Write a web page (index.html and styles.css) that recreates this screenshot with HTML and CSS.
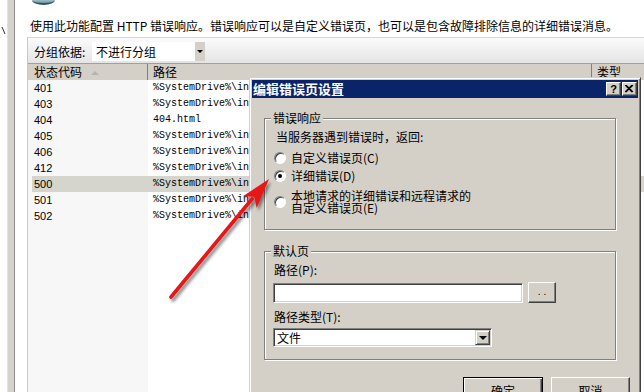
FILE: index.html
```html
<!DOCTYPE html>
<html lang="zh-CN">
<head>
<meta charset="utf-8">
<title>HTTP 错误响应</title>
<link rel="stylesheet" href="styles.css">
</head>
<body>
<div class="app">
  <div class="side">
    <svg class="side-mark" width="7" height="10" viewBox="0 0 7 10"><path d="M2 1 L5 8" stroke="#333" stroke-width="1" fill="none"/></svg>
  </div>
  <div class="main">
    <div class="top">
      <div class="feature-icon"></div>
      <p class="desc">使用此功能配置 HTTP 错误响应。错误响应可以是自定义错误页，也可以是包含故障排除信息的详细错误消息。</p>
    </div>
    <div class="panel">
      <div class="toolbar">
        <span class="tb-label">分组依据:</span>
        <div class="combo"><span class="combo-text">不进行分组</span><span class="combo-btn"><i class="tri"></i></span></div>
      </div>
      <div class="lv-header">
        <div class="hcell c1">状态代码<i class="sort"></i></div>
        <div class="hcell c2">路径</div>
        <div class="hcell c3">类型</div>
      </div>
      <div class="lv-body">
        <div class="row"><span class="code">401</span><span class="path">%SystemDrive%\inetpub\custerr\&lt;LANGUAGE-TAG&gt;\401.htm</span><span class="type">文件</span></div>
        <div class="row"><span class="code">403</span><span class="path">%SystemDrive%\inetpub\custerr\&lt;LANGUAGE-TAG&gt;\403.htm</span><span class="type">文件</span></div>
        <div class="row"><span class="code">404</span><span class="path">404.html</span><span class="type">文件</span></div>
        <div class="row"><span class="code">405</span><span class="path">%SystemDrive%\inetpub\custerr\&lt;LANGUAGE-TAG&gt;\405.htm</span><span class="type">文件</span></div>
        <div class="row"><span class="code">406</span><span class="path">%SystemDrive%\inetpub\custerr\&lt;LANGUAGE-TAG&gt;\406.htm</span><span class="type">文件</span></div>
        <div class="row"><span class="code">412</span><span class="path">%SystemDrive%\inetpub\custerr\&lt;LANGUAGE-TAG&gt;\412.htm</span><span class="type">文件</span></div>
        <div class="row sel"><span class="code">500</span><span class="path">%SystemDrive%\inetpub\custerr\&lt;LANGUAGE-TAG&gt;\500.htm</span><span class="type">文件</span></div>
        <div class="row"><span class="code">501</span><span class="path">%SystemDrive%\inetpub\custerr\&lt;LANGUAGE-TAG&gt;\501.htm</span><span class="type">文件</span></div>
        <div class="row"><span class="code">502</span><span class="path">%SystemDrive%\inetpub\custerr\&lt;LANGUAGE-TAG&gt;\502.htm</span><span class="type">文件</span></div>
      </div>
    </div>
  </div>
</div>

<div class="dialog">
  <div class="titlebar">
    <span class="title">编辑错误页设置</span>
    <span class="tbtn help">?</span>
    <span class="tbtn close"><svg width="9" height="8" viewBox="0 0 9 8"><path d="M1 0 L8 7 M0 0 L7 7 M8 0 L1 7 M7 0 L0 7" stroke="#000" stroke-width="1.1" fill="none"/></svg></span>
  </div>
  <div class="dbody">
    <div class="group group1">
      <div class="gtitle">错误响应</div>
      <div class="prompt">当服务器遇到错误时，返回:</div>
      <div class="radio-row r1"><span class="radio"></span><span>自定义错误页(C)</span></div>
      <div class="radio-row r2"><span class="radio on"></span><span>详细错误(D)</span></div>
      <div class="radio-row r3"><span class="radio"></span><span>本地请求的详细错误和远程请求的<br>自定义错误页(E)</span></div>
    </div>
    <div class="group group2">
      <div class="gtitle">默认页</div>
      <div class="label">路径(P):</div>
      <div class="path-row">
        <div class="textbox"></div>
        <div class="btn browse">. .</div>
      </div>
      <div class="label label2">路径类型(T):</div>
      <div class="select"><span class="select-text">文件</span><span class="select-btn"><i class="tri big"></i></span></div>
    </div>
    <div class="actions">
      <div class="pbtn default">确定</div>
      <div class="pbtn btn cancel">取消</div>
    </div>
  </div>
</div>

<svg class="arrow" width="644" height="392" viewBox="0 0 644 392">
  <defs>
    <filter id="sh" x="-20%" y="-20%" width="140%" height="140%">
      <feDropShadow dx="2" dy="3" stdDeviation="1.4" flood-color="#000" flood-opacity="0.45"/>
    </filter>
  </defs>
  <g filter="url(#sh)">
    <path d="M171 297 L252 199" stroke="#e81414" stroke-width="3.6" stroke-linecap="round" fill="none"/>
    <polygon points="269,179 242.9,196.3 254.3,196.7 256.7,207.9" fill="#e81414"/>
  </g>
</svg>
</body>
</html>
```
FILE: styles.css
```css
* { box-sizing: border-box; }

body {
  margin: 0;
  width: 644px;
  height: 392px;
  overflow: hidden;
  background: #fff;
  color: #000;
  font-family: "Noto Sans CJK SC", "Noto Sans", sans-serif;
  font-size: 12px;
  line-height: 14px;
  position: relative;
}

.app {
  display: flex;
  height: 392px;
}

.side {
  width: 15px;
  flex: none;
  background: linear-gradient(to right, #fff 0 7px, #e2e2e2 7px 8px, #d6d3cc 8px 14px, #8c8c8c 14px 15px);
}

.side-mark {
  display: block;
  margin-top: 26px;
}

.main {
  flex: 1;
  min-width: 0;
  display: flex;
  flex-direction: column;
}

.top {
  height: 37px;
  padding-left: 17px;
}

.feature-icon {
  width: 23px;
  height: 5px;
  border-radius: 0 0 12px 12px / 0 0 5px 5px;
  background: linear-gradient(#9fbcc4, #6f98a4);
  border-bottom: 2px solid #2c5464;
}

.desc {
  margin: 14px 0 0 -2px;
  line-height: 14px;
  white-space: nowrap;
}

.panel {
  flex: 1;
  min-height: 0;
  margin-left: 12px;
  border-left: 1px solid #c9c9c9;
  display: flex;
  flex-direction: column;
}

.toolbar {
  height: 26px;
  border-top: 1px solid #d6d6d6;
  background: linear-gradient(#fbfbfb, #e4e4e4);
  display: flex;
  align-items: center;
  padding: 2px 0 0 6px;
}

.tb-label {
  width: 58px;
  line-height: 14px;
}

.combo {
  display: flex;
  width: 113px;
  height: 19px;
  background: #fff;
}

.combo-text {
  flex: 1;
  padding-left: 4px;
  line-height: 19px;
}

.combo-btn {
  width: 10px;
  background: #d4d0c8;
  display: flex;
  align-items: center;
  justify-content: center;
}

.tri {
  display: block;
  border-left: 3px solid transparent;
  border-right: 3px solid transparent;
  border-top: 3px solid #000;
}

.tri.big {
  border-left-width: 4px;
  border-right-width: 4px;
  border-top-width: 4px;
}

.lv-header {
  display: flex;
  height: 17px;
  border-top: 1px solid #a0a0a0;
  background: #d4d0c8;
}

.hcell {
  line-height: 16px;
  white-space: nowrap;
}

.c1 {
  width: 120px;
  padding-left: 6px;
  border-right: 1px solid #808080;
}

.c2 {
  width: 444px;
  padding-left: 5px;
  border-right: 1px solid #808080;
}

.c3 {
  flex: 1;
  padding-left: 5px;
}

.sort {
  display: inline-block;
  vertical-align: middle;
  margin: -2px 0 0 9px;
  border-left: 4px solid transparent;
  border-right: 4px solid transparent;
  border-bottom: 4px solid #b4b4b4;
}

.lv-body {
  flex: 1;
  overflow: hidden;
  background: linear-gradient(to right, #f7f7f7 0 120px, #fff 120px);
}

.row {
  display: flex;
  height: 16px;
  line-height: 16px;
  margin-left: 4px;
  white-space: nowrap;
}

.row.sel {
  background: #d5d5cd;
}

.code {
  width: 115px;
  flex: none;
  padding-left: 2px;
  font-family: "Liberation Sans", Arial, sans-serif;
  font-size: 11px;
}

.path {
  width: 444px;
  flex: none;
  padding-left: 6px;
  overflow: hidden;
  font-family: "Liberation Mono", monospace;
  font-size: 10px;
}

.type {
  padding-left: 6px;
}

/* dialog window */
.dialog {
  position: absolute;
  left: 249px;
  top: 77px;
  width: 392px;
  height: 330px;
  background: #d4d0c8;
  border: 1px solid;
  border-color: #d4d0c8 #404040 #404040 #d4d0c8;
  box-shadow: inset 1px 1px #fff, inset -1px -1px #808080;
  padding: 2px;
}

.titlebar {
  height: 18px;
  background: #0a246a;
  color: #fff;
  display: flex;
  align-items: center;
}

.title {
  flex: 1;
  padding-left: 1px;
  font-weight: bold;
  font-size: 13px;
  line-height: 18px;
}

.tbtn {
  width: 15px;
  height: 14px;
  margin-right: 1px;
  background: #d4d0c8;
  border: 1px solid;
  border-color: #fff #404040 #404040 #fff;
  box-shadow: inset -1px -1px #808080;
  color: #000;
  display: flex;
  align-items: center;
  justify-content: center;
  font: bold 11px/12px "Liberation Sans", Arial, sans-serif;
}

.dbody {
  padding: 0 8px 0 12px;
}

.group {
  margin-right: 14px;
  border: 1px solid #808080;
  box-shadow: inset 1px 1px #fff, 1px 1px #fff;
  padding: 0 8px;
}

.group1 {
  margin-top: 20px;
  padding-bottom: 15px;
}

.group2 {
  margin-top: 21px;
  padding-bottom: 12px;
}

.gtitle {
  width: fit-content;
  margin: -8px 0 0 -2px;
  padding: 0 2px;
  background: #d4d0c8;
  line-height: 14px;
}

.prompt {
  margin-top: 5px;
  padding-left: 3px;
  line-height: 14px;
}

.radio-row {
  display: flex;
  align-items: center;
  gap: 5px;
  padding-left: 1px;
  line-height: 14px;
}

.r1 { margin-top: 7px; }
.r2 { margin-top: 4px; }
.r3 { margin-top: 7px; line-height: 12px; }

.radio {
  width: 12px;
  height: 12px;
  flex: none;
  border-radius: 50%;
  background: #fff;
  border: 1px solid;
  border-color: #808080 #fff #fff #808080;
  box-shadow: inset 1px 1px #404040;
  position: relative;
}

.radio.on::after {
  content: "";
  position: absolute;
  left: 3px;
  top: 3px;
  width: 4px;
  height: 4px;
  border-radius: 50%;
  background: #000;
}

.label {
  margin-top: 5px;
  padding-left: 1px;
  line-height: 14px;
}

.label2 {
  margin-top: 7px;
}

.path-row {
  display: flex;
  align-items: flex-start;
  gap: 5px;
  margin-top: 6px;
}

.textbox {
  width: 250px;
  height: 20px;
  background: #fff;
  border: 1px solid;
  border-color: #808080 #fff #fff #808080;
  box-shadow: inset 1px 1px #404040, inset -1px -1px #d4d0c8;
}

.btn {
  background: #d4d0c8;
  border: 1px solid;
  border-color: #fff #404040 #404040 #fff;
  box-shadow: inset -1px -1px #808080;
}

.browse {
  width: 28px;
  height: 21px;
  margin-top: -1px;
  text-align: center;
  font-family: "Liberation Sans", Arial, sans-serif;
  font-size: 10px;
  line-height: 17px;
}

.select {
  display: flex;
  width: 219px;
  height: 19px;
  margin-top: 4px;
  background: #fff;
  border: 1px solid;
  border-color: #808080 #fff #fff #808080;
  box-shadow: inset 1px 1px #404040, inset -1px -1px #d4d0c8;
  padding: 1px;
}

.select-text {
  flex: 1;
  padding-left: 2px;
  line-height: 15px;
}

.select-btn {
  width: 15px;
  background: #d4d0c8;
  border: 1px solid;
  border-color: #d4d0c8 #404040 #404040 #d4d0c8;
  box-shadow: inset 1px 1px #fff, inset -1px -1px #808080;
  display: flex;
  align-items: center;
  justify-content: center;
}

.actions {
  display: flex;
  justify-content: flex-end;
  gap: 8px;
  margin-top: 17px;
}

.pbtn {
  height: 27px;
  line-height: 27px;
  text-align: center;
}

.default {
  width: 80px;
  background: #d4d0c8;
  border: 1px solid #000;
  box-shadow: inset 1px 1px #fff, inset -1px -1px #404040, inset -2px -2px #808080;
  line-height: 25px;
}

.cancel {
  width: 79px;
  line-height: 25px;
}

.arrow {
  position: absolute;
  left: 0;
  top: 0;
  pointer-events: none;
}
```
